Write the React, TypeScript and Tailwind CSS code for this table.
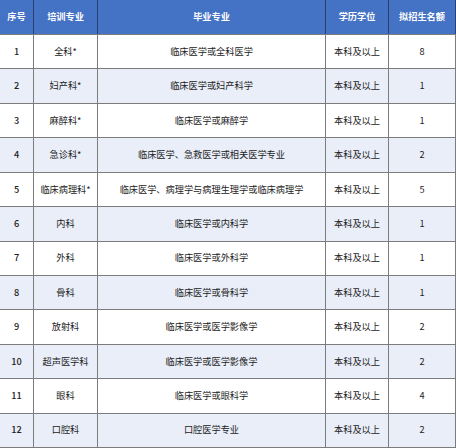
import React from "react";

const rows: [string, string, string, string, string][] = [
  ["1", "全科*", "临床医学或全科医学", "本科及以上", "8"],
  ["2", "妇产科*", "临床医学或妇产科学", "本科及以上", "1"],
  ["3", "麻醉科*", "临床医学或麻醉学", "本科及以上", "1"],
  ["4", "急诊科*", "临床医学、急救医学或相关医学专业", "本科及以上", "2"],
  ["5", "临床病理科*", "临床医学、病理学与病理生理学或临床病理学", "本科及以上", "5"],
  ["6", "内科", "临床医学或内科学", "本科及以上", "1"],
  ["7", "外科", "临床医学或外科学", "本科及以上", "1"],
  ["8", "骨科", "临床医学或骨科学", "本科及以上", "1"],
  ["9", "放射科", "临床医学或医学影像学", "本科及以上", "2"],
  ["10", "超声医学科", "临床医学或医学影像学", "本科及以上", "2"],
  ["11", "眼科", "临床医学或眼科学", "本科及以上", "4"],
  ["12", "口腔科", "口腔医学专业", "本科及以上", "2"],
];

const headers = ["序号", "培训专业", "毕业专业", "学历学位", "拟招生名额"];
const cols = "grid grid-cols-[34px_64px_228px_63px_67px]";

export default function App() {
  return (
    <div
      className="w-[456px] h-[448px] flex flex-col bg-white text-[9.2px] text-[#222222]"
      style={{ fontFamily: '"Noto Sans CJK SC", "Noto Sans", sans-serif' }}
    >
      <div className={`${cols} h-[35px] bg-[#4472c4] text-white font-bold border-b border-[#7c7c7c]`}>
        {headers.map((h, i) => (
          <div key={i} className="flex items-center justify-center border-r border-[#2a3f6e]">
            {h}
          </div>
        ))}
      </div>
      {rows.map((r, ri) => (
        <div
          key={ri}
          className={`${cols} flex-1 border-b border-[#7c7c7c] ${ri % 2 === 1 ? "bg-[#e9eef8]" : "bg-white"}`}
        >
          {r.map((c, ci) => (
            <div
              key={ci}
              className={`flex items-center justify-center border-r border-[#7c7c7c] ${ci === 0 ? "font-medium" : ""}`}
            >
              {c}
            </div>
          ))}
        </div>
      ))}
    </div>
  );
}
